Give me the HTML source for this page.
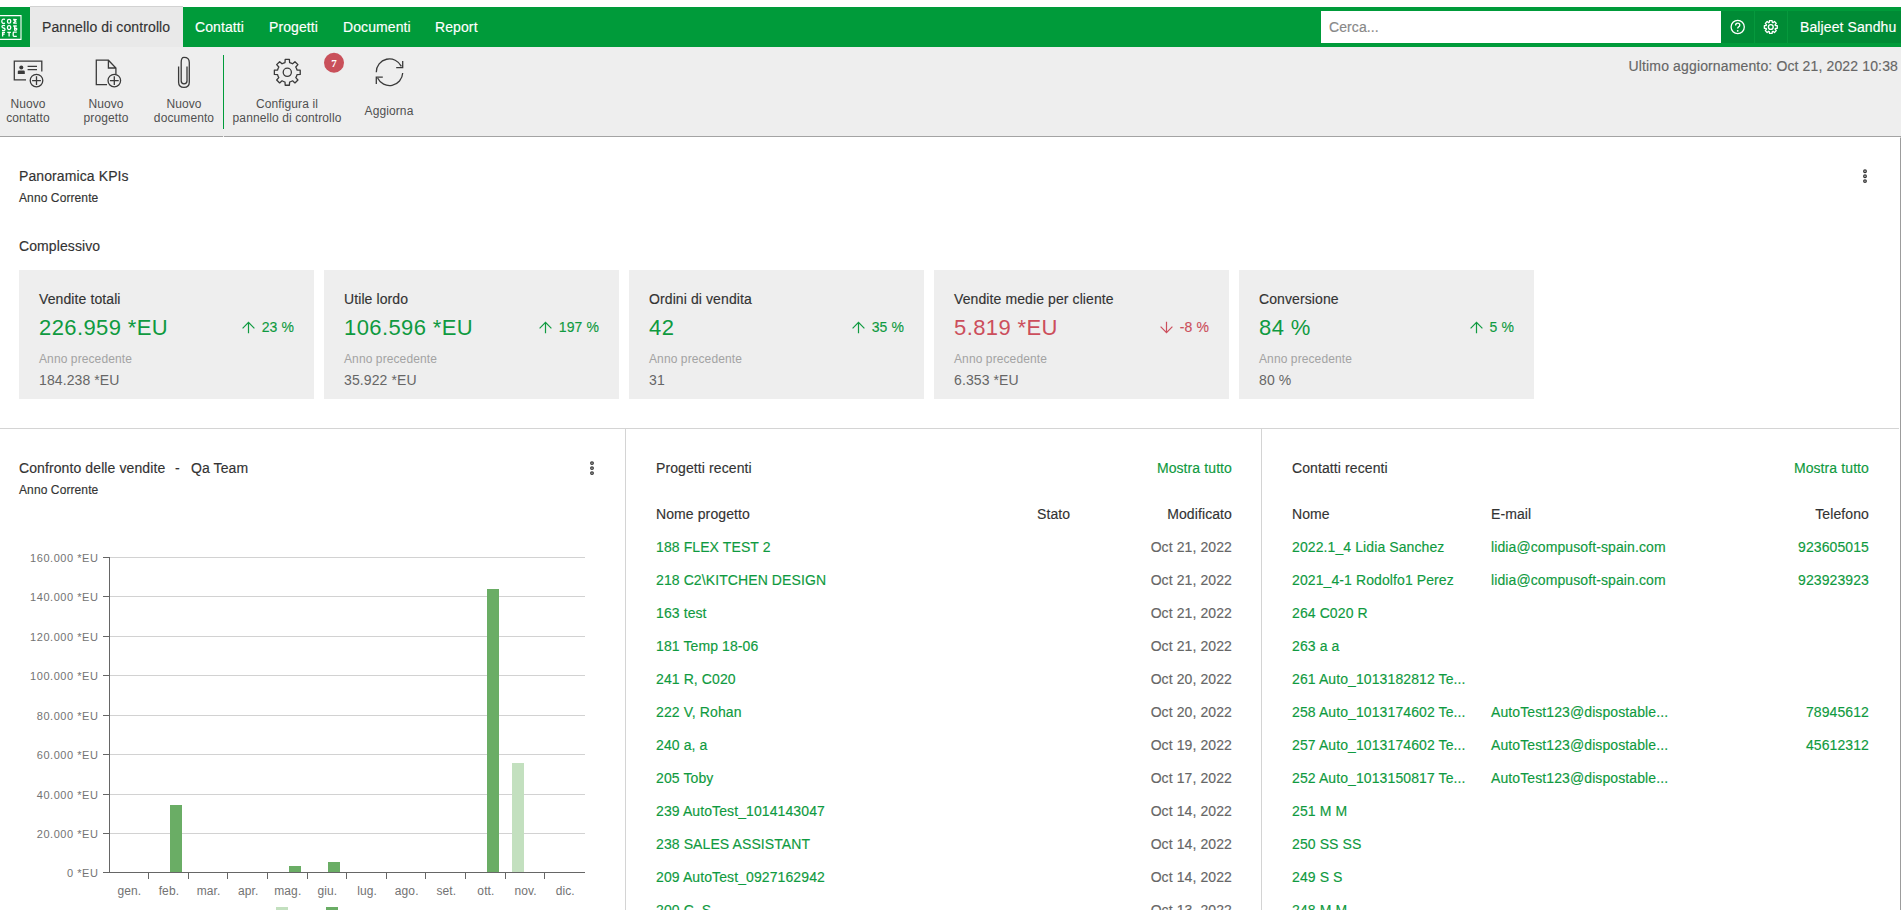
<!DOCTYPE html>
<html><head><meta charset="utf-8">
<style>
*{box-sizing:border-box;margin:0;padding:0}
html,body{width:1901px;height:910px;overflow:hidden;background:#fff}
body{font-family:"Liberation Sans",sans-serif;color:#333;position:relative;letter-spacing:0.1px;-webkit-text-stroke:0.15px currentColor}
.abs{position:absolute;white-space:nowrap}
#nav{position:absolute;left:0;top:7px;width:1901px;height:40px;background:#009b3a}
#logo{position:absolute;left:0;top:0;width:30px;height:40px}
#tab{position:absolute;left:30px;top:-1px;width:153px;height:41px;background:#e9e9e9;border-top:1px solid #d2d2d2}
.nv{position:absolute;top:12px;font-size:14px;color:#fff;line-height:16px}
#tb{position:absolute;left:0;top:47px;width:1901px;height:90px;background:#eeeeee;border-bottom:1px solid #a3a3a3}
.tl{position:absolute;font-size:12px;line-height:14px;color:#505050;-webkit-text-stroke:0;text-align:center;white-space:nowrap}
#main{position:absolute;left:0;top:137px;width:1901px;height:773px;background:#fff;border-right:1px solid #9c9c9c;border-top:1px solid #fff}
.t14{font-size:14px;line-height:16px;color:#333}
.t12{font-size:12px;line-height:14px;color:#333}
.card{position:absolute;top:270px;width:295px;height:129px;background:#eeeeee}
.card .ct{position:absolute;left:20px;top:21px;font-size:14px;line-height:16px;color:#333;white-space:nowrap}
.card .cv{position:absolute;left:20px;top:45px;font-size:22px;line-height:25px;letter-spacing:0.4px;-webkit-text-stroke:0;color:#0f9a40;white-space:nowrap}
.card .cp{position:absolute;right:20px;top:49px;font-size:14px;line-height:16px;color:#0f9a40;white-space:nowrap;display:flex;align-items:center}
.card .ca{position:absolute;left:20px;top:82px;-webkit-text-stroke:0;font-size:12px;line-height:14px;color:#a3a3a3;white-space:nowrap}
.card .cq{position:absolute;left:20px;top:102px;-webkit-text-stroke:0;font-size:14px;line-height:16px;color:#666;white-space:nowrap}
.red{color:#cc4e5c!important}
.g{color:#0f9a40}
.row{position:absolute;font-size:14px;line-height:16px;white-space:nowrap}
</style></head><body>
<div id="nav">
  <div id="logo"><svg style="position:absolute;left:0;top:0" width="30" height="40">
<path d="M0 8.6H21V32.4H0" fill="none" stroke="#fff" stroke-width="1.1"/>
<g fill="none" stroke="#fff" stroke-width="1.3">
<path d="M5 12.4Q3.3 11.9 2.4 12.6Q1.8 13.2 1.8 14.3Q1.8 15.6 2.6 16.1Q3.4 16.5 5 16.1"/>
<rect x="7.5" y="12.3" width="3.2" height="3.9" rx="1.5"/>
<path d="M13.2 12.3L16.8 12.6M13.2 16.2H16.8M13.3 12.6L15.6 14.3L13.3 16"/>
<path d="M5 18.6Q2 18 2 19.5Q2 21 3.5 21Q5 21 5 22.5Q5 24 2 23.5"/>
<rect x="7.5" y="18.6" width="3.2" height="3.9" rx="1.5"/>
<path d="M13.2 19H16.8M14.6 19V23.4M14.6 21Q16.8 21 16.8 22.2Q16.8 23.3 14.6 23.3"/>
<path d="M2.6 25V29.6M2.6 25.4H5M2.6 27.2H4.6"/>
<path d="M7.3 25.4H10.9M9.1 25.4V29.6"/>
<path d="M16.8 25.2H14Q13.2 25.2 13.2 26V28.6Q13.2 29.4 14 29.4H16.8"/>
</g></svg></div>
  <div id="tab"><span class="nv" style="left:12px;top:12px;color:#333">Pannello di controllo</span></div>
  <span class="nv" style="left:195px">Contatti</span>
  <span class="nv" style="left:269px">Progetti</span>
  <span class="nv" style="left:343px">Documenti</span>
  <span class="nv" style="left:435px">Report</span>
  <div style="position:absolute;left:1321px;top:4px;width:400px;height:32px;background:#fff"></div>
  <span class="nv" style="left:1329px;color:#888">Cerca...</span>
  <div style="position:absolute;left:1721px;top:4px;width:180px;height:32px;background:#008b35"></div>
<div style="position:absolute;left:1754px;top:4px;width:1px;height:32px;background:#06993d"></div>
<div style="position:absolute;left:1787px;top:4px;width:1px;height:32px;background:#06993d"></div>
<svg style="position:absolute;left:1721px;top:4px" width="80" height="32">
<circle cx="16.7" cy="16" r="6.6" fill="none" stroke="#fff" stroke-width="1.3"/>
<path d="M14.6 14.4Q14.6 12.2 16.7 12.2Q18.8 12.2 18.8 14.1Q18.8 15.3 17.6 15.9Q16.7 16.4 16.7 17.6" fill="none" stroke="#fff" stroke-width="1.3"/>
<circle cx="16.7" cy="19.8" r="0.9" fill="#fff"/>
<path d="M48.30 11.44L48.50 9.53L51.10 9.53L51.30 11.44A4.8 4.8 0 0 1 51.96 11.72L53.46 10.51L55.29 12.34L54.08 13.84A4.8 4.8 0 0 1 54.36 14.50L56.27 14.70L56.27 17.30L54.36 17.50A4.8 4.8 0 0 1 54.08 18.16L55.29 19.66L53.46 21.49L51.96 20.28A4.8 4.8 0 0 1 51.30 20.56L51.10 22.47L48.50 22.47L48.30 20.56A4.8 4.8 0 0 1 47.64 20.28L46.14 21.49L44.31 19.66L45.52 18.16A4.8 4.8 0 0 1 45.24 17.50L43.33 17.30L43.33 14.70L45.24 14.50A4.8 4.8 0 0 1 45.52 13.84L44.31 12.34L46.14 10.51L47.64 11.72A4.8 4.8 0 0 1 48.30 11.44Z" fill="none" stroke="#fff" stroke-width="1.3" stroke-linejoin="round"/>
<circle cx="49.8" cy="16" r="2.4" fill="none" stroke="#fff" stroke-width="1.4"/>
</svg>
  <span class="nv" style="left:1800px;">Baljeet Sandhu</span>
</div>
<div id="tb">
  <span class="abs t14" style="right:3px;top:11px;color:#666;letter-spacing:0.14px">Ultimo aggiornamento: Oct 21, 2022 10:38</span>
  <div style="position:absolute;left:223px;top:8px;width:1px;height:74px;background:#009b3a"></div><div style="position:absolute;left:223px;top:89px;width:1px;height:1px;background:#eeeeee"></div>
  <span class="tl" style="left:28px;top:50px;transform:translateX(-50%)">Nuovo<br>contatto</span>
  <span class="tl" style="left:106px;top:50px;transform:translateX(-50%)">Nuovo<br>progetto</span>
  <span class="tl" style="left:184px;top:50px;transform:translateX(-50%)">Nuovo<br>documento</span>
  <span class="tl" style="left:287px;top:50px;transform:translateX(-50%)">Configura il<br>pannello di controllo</span>
  <span class="tl" style="left:389px;top:57px;transform:translateX(-50%)">Aggiorna</span>
</div>
<div id="main"></div>
<svg style="position:absolute;left:0;top:0" width="460" height="137" fill="none" stroke="#3a3a3a" stroke-width="1.3">
<path d="M26 79.8H14.3V61.1H41.8V71.6"/>
<circle cx="21.3" cy="67.6" r="2" fill="#3a3a3a" stroke="none"/>
<path d="M17.8 74V71.8Q17.8 70.6 19 70.6H23.6Q24.8 70.6 24.8 71.8V74Z" fill="#3a3a3a" stroke="none"/>
<path d="M27.6 66.4H37M27.6 69.6H37" stroke-width="1.1"/>
<circle cx="36.5" cy="80.6" r="6.3"/>
<path d="M36.5 76.2V85M32.1 80.6H40.9"/>
<path d="M107 84.6H96.3V60.2H108.4L115.9 68V74M108.4 60.2V68H115.9"/>
<circle cx="114.3" cy="80.6" r="6.3"/>
<path d="M114.3 76.2V85M109.9 80.6H118.7"/>
<path d="M187 66.5V81Q187 83.8 184 83.8Q181.2 83.8 181.2 81V62.4Q181.2 57.3 184 57.3Q189.3 57.3 189.3 62.4V82.2Q189.3 87.3 184 87.3Q178.6 87.3 178.6 82.2V66.5"/>
<path d="M285.00 62.57L285.20 59.37L289.40 59.37L289.60 62.57A10.0 10.0 0 0 1 292.56 63.79L294.96 61.67L297.93 64.64L295.81 67.04A10.0 10.0 0 0 1 297.03 70.00L300.23 70.20L300.23 74.40L297.03 74.60A10.0 10.0 0 0 1 295.81 77.56L297.93 79.96L294.96 82.93L292.56 80.81A10.0 10.0 0 0 1 289.60 82.03L289.40 85.23L285.20 85.23L285.00 82.03A10.0 10.0 0 0 1 282.04 80.81L279.64 82.93L276.67 79.96L278.79 77.56A10.0 10.0 0 0 1 277.57 74.60L274.37 74.40L274.37 70.20L277.57 70.00A10.0 10.0 0 0 1 278.79 67.04L276.67 64.64L279.64 61.67L282.04 63.79A10.0 10.0 0 0 1 285.00 62.57Z" stroke-linejoin="round"/>
<circle cx="287.3" cy="72.3" r="4.1"/>
<path d="M376.3 72.2A13.2 13.2 0 0 1 401.4 66.4M402.7 73A13.2 13.2 0 0 1 377.6 78"/>
<path d="M402.7 61.1V67.6H396.2M376.3 83.9V77.2H382.8"/>
<circle cx="334" cy="62.8" r="10" fill="#c9505a" stroke="none"/>
<text x="334" y="66.8" text-anchor="middle" font-family="Liberation Serif" font-weight="bold" font-size="11" fill="#fff" stroke="none">7</text>
</svg>
<!-- KPI -->
<span class="abs t14" style="left:19px;top:168px">Panoramica KPIs</span>
<span class="abs t12" style="left:19px;top:191px">Anno Corrente</span>
<span class="abs t14" style="left:19px;top:238px">Complessivo</span>
<div class="card" style="left:19px"><span class="ct">Vendite totali</span><span class="cv">226.959 *EU</span><span class="cp"><svg width="13" height="13" viewBox="0 0 13 13" style="margin-right:7px"><path d="M6.5 1.3V12.3M0.6 7.3L6.5 1.3L12.4 7.3" fill="none" stroke="currentColor" stroke-width="1.2"/></svg>23 %</span><span class="ca">Anno precedente</span><span class="cq">184.238 *EU</span></div>
<div class="card" style="left:324px"><span class="ct">Utile lordo</span><span class="cv">106.596 *EU</span><span class="cp"><svg width="13" height="13" viewBox="0 0 13 13" style="margin-right:7px"><path d="M6.5 1.3V12.3M0.6 7.3L6.5 1.3L12.4 7.3" fill="none" stroke="currentColor" stroke-width="1.2"/></svg>197 %</span><span class="ca">Anno precedente</span><span class="cq">35.922 *EU</span></div>
<div class="card" style="left:629px"><span class="ct">Ordini di vendita</span><span class="cv">42</span><span class="cp"><svg width="13" height="13" viewBox="0 0 13 13" style="margin-right:7px"><path d="M6.5 1.3V12.3M0.6 7.3L6.5 1.3L12.4 7.3" fill="none" stroke="currentColor" stroke-width="1.2"/></svg>35 %</span><span class="ca">Anno precedente</span><span class="cq">31</span></div>
<div class="card" style="left:934px"><span class="ct">Vendite medie per cliente</span><span class="cv red">5.819 *EU</span><span class="cp red"><svg width="13" height="13" viewBox="0 0 13 13" style="margin-right:7px"><path d="M6.5 0.7V11.7M0.6 5.7L6.5 11.7L12.4 5.7" fill="none" stroke="currentColor" stroke-width="1.2"/></svg>-8 %</span><span class="ca">Anno precedente</span><span class="cq">6.353 *EU</span></div>
<div class="card" style="left:1239px"><span class="ct">Conversione</span><span class="cv">84 %</span><span class="cp"><svg width="13" height="13" viewBox="0 0 13 13" style="margin-right:7px"><path d="M6.5 1.3V12.3M0.6 7.3L6.5 1.3L12.4 7.3" fill="none" stroke="currentColor" stroke-width="1.2"/></svg>5 %</span><span class="ca">Anno precedente</span><span class="cq">80 %</span></div>
<div style="position:absolute;left:0;top:428px;width:1899px;height:1px;background:#d4d4d4"></div>
<div style="position:absolute;left:625px;top:429px;width:1px;height:481px;background:#d4d4d4"></div>
<div style="position:absolute;left:1261px;top:429px;width:1px;height:481px;background:#d4d4d4"></div>
<span class="abs t14" style="left:19px;top:460px">Confronto delle vendite</span><span class="abs t14" style="left:175px;top:460px">-</span><span class="abs t14" style="left:191px;top:460px">Qa Team</span>
<span class="abs t12" style="left:19px;top:483px">Anno Corrente</span>
<svg style="position:absolute;left:0;top:0" width="626" height="910"><line x1="110" y1="557.5" x2="585" y2="557.5" stroke="#d2d2d2" stroke-width="1"/><line x1="103" y1="557.5" x2="109" y2="557.5" stroke="#666" stroke-width="1"/><text x="98.5" y="562" text-anchor="end" font-family="Liberation Sans" font-size="11" letter-spacing="0.55" fill="#737373">160.000 *EU</text><line x1="110" y1="596.5" x2="585" y2="596.5" stroke="#d2d2d2" stroke-width="1"/><line x1="103" y1="596.5" x2="109" y2="596.5" stroke="#666" stroke-width="1"/><text x="98.5" y="601" text-anchor="end" font-family="Liberation Sans" font-size="11" letter-spacing="0.55" fill="#737373">140.000 *EU</text><line x1="110" y1="636.5" x2="585" y2="636.5" stroke="#d2d2d2" stroke-width="1"/><line x1="103" y1="636.5" x2="109" y2="636.5" stroke="#666" stroke-width="1"/><text x="98.5" y="641" text-anchor="end" font-family="Liberation Sans" font-size="11" letter-spacing="0.55" fill="#737373">120.000 *EU</text><line x1="110" y1="675.5" x2="585" y2="675.5" stroke="#d2d2d2" stroke-width="1"/><line x1="103" y1="675.5" x2="109" y2="675.5" stroke="#666" stroke-width="1"/><text x="98.5" y="680" text-anchor="end" font-family="Liberation Sans" font-size="11" letter-spacing="0.55" fill="#737373">100.000 *EU</text><line x1="110" y1="715.5" x2="585" y2="715.5" stroke="#d2d2d2" stroke-width="1"/><line x1="103" y1="715.5" x2="109" y2="715.5" stroke="#666" stroke-width="1"/><text x="98.5" y="720" text-anchor="end" font-family="Liberation Sans" font-size="11" letter-spacing="0.55" fill="#737373">80.000 *EU</text><line x1="110" y1="754.5" x2="585" y2="754.5" stroke="#d2d2d2" stroke-width="1"/><line x1="103" y1="754.5" x2="109" y2="754.5" stroke="#666" stroke-width="1"/><text x="98.5" y="759" text-anchor="end" font-family="Liberation Sans" font-size="11" letter-spacing="0.55" fill="#737373">60.000 *EU</text><line x1="110" y1="794.5" x2="585" y2="794.5" stroke="#d2d2d2" stroke-width="1"/><line x1="103" y1="794.5" x2="109" y2="794.5" stroke="#666" stroke-width="1"/><text x="98.5" y="799" text-anchor="end" font-family="Liberation Sans" font-size="11" letter-spacing="0.55" fill="#737373">40.000 *EU</text><line x1="110" y1="833.5" x2="585" y2="833.5" stroke="#d2d2d2" stroke-width="1"/><line x1="103" y1="833.5" x2="109" y2="833.5" stroke="#666" stroke-width="1"/><text x="98.5" y="838" text-anchor="end" font-family="Liberation Sans" font-size="11" letter-spacing="0.55" fill="#737373">20.000 *EU</text><line x1="103" y1="872.5" x2="109" y2="872.5" stroke="#666" stroke-width="1"/><text x="98.5" y="877" text-anchor="end" font-family="Liberation Sans" font-size="11" letter-spacing="0.55" fill="#737373">0 *EU</text><line x1="109.5" y1="557" x2="109.5" y2="873" stroke="#666" stroke-width="1"/><line x1="103" y1="872.5" x2="585" y2="872.5" stroke="#666" stroke-width="1"/><text x="129.3" y="895" text-anchor="middle" font-family="Liberation Sans" font-size="12" fill="#737373">gen.</text><line x1="148.5" y1="872.5" x2="148.5" y2="879" stroke="#666" stroke-width="1"/><text x="168.9" y="895" text-anchor="middle" font-family="Liberation Sans" font-size="12" fill="#737373">feb.</text><line x1="188.5" y1="872.5" x2="188.5" y2="879" stroke="#666" stroke-width="1"/><text x="208.6" y="895" text-anchor="middle" font-family="Liberation Sans" font-size="12" fill="#737373">mar.</text><line x1="227.5" y1="872.5" x2="227.5" y2="879" stroke="#666" stroke-width="1"/><text x="248.2" y="895" text-anchor="middle" font-family="Liberation Sans" font-size="12" fill="#737373">apr.</text><line x1="267.5" y1="872.5" x2="267.5" y2="879" stroke="#666" stroke-width="1"/><text x="287.8" y="895" text-anchor="middle" font-family="Liberation Sans" font-size="12" fill="#737373">mag.</text><line x1="307.5" y1="872.5" x2="307.5" y2="879" stroke="#666" stroke-width="1"/><text x="327.4" y="895" text-anchor="middle" font-family="Liberation Sans" font-size="12" fill="#737373">giu.</text><line x1="346.5" y1="872.5" x2="346.5" y2="879" stroke="#666" stroke-width="1"/><text x="367.1" y="895" text-anchor="middle" font-family="Liberation Sans" font-size="12" fill="#737373">lug.</text><line x1="386.5" y1="872.5" x2="386.5" y2="879" stroke="#666" stroke-width="1"/><text x="406.7" y="895" text-anchor="middle" font-family="Liberation Sans" font-size="12" fill="#737373">ago.</text><line x1="425.5" y1="872.5" x2="425.5" y2="879" stroke="#666" stroke-width="1"/><text x="446.3" y="895" text-anchor="middle" font-family="Liberation Sans" font-size="12" fill="#737373">set.</text><line x1="465.5" y1="872.5" x2="465.5" y2="879" stroke="#666" stroke-width="1"/><text x="485.9" y="895" text-anchor="middle" font-family="Liberation Sans" font-size="12" fill="#737373">ott.</text><line x1="505.5" y1="872.5" x2="505.5" y2="879" stroke="#666" stroke-width="1"/><text x="525.6" y="895" text-anchor="middle" font-family="Liberation Sans" font-size="12" fill="#737373">nov.</text><line x1="544.5" y1="872.5" x2="544.5" y2="879" stroke="#666" stroke-width="1"/><text x="565.2" y="895" text-anchor="middle" font-family="Liberation Sans" font-size="12" fill="#737373">dic.</text><rect x="170" y="805" width="12" height="67" fill="#6aad65"/><rect x="289" y="866" width="12" height="6" fill="#6aad65"/><rect x="328" y="862" width="12" height="10" fill="#6aad65"/><rect x="487" y="589" width="12" height="283" fill="#6aad65"/><rect x="512" y="763" width="12" height="109" fill="#c3e0bf"/><rect x="276" y="907" width="12" height="3" fill="#c3e0bf"/><rect x="326" y="907" width="12" height="3" fill="#6aad65"/></svg>
<span class="abs t14" style="left:656px;top:460px">Progetti recenti</span>
<span class="abs t14 g" style="right:669px;top:460px">Mostra tutto</span>
<span class="abs t14" style="left:656px;top:506px">Nome progetto</span>
<span class="abs t14" style="left:1037px;top:506px">Stato</span>
<span class="abs t14" style="right:669px;top:506px">Modificato</span>
<span class="row g" style="left:656px;top:539px">188 FLEX TEST 2</span><span class="row" style="right:669px;top:539px;color:#666">Oct 21, 2022</span>
<span class="row g" style="left:656px;top:572px">218 C2\KITCHEN DESIGN</span><span class="row" style="right:669px;top:572px;color:#666">Oct 21, 2022</span>
<span class="row g" style="left:656px;top:605px">163 test</span><span class="row" style="right:669px;top:605px;color:#666">Oct 21, 2022</span>
<span class="row g" style="left:656px;top:638px">181 Temp 18-06</span><span class="row" style="right:669px;top:638px;color:#666">Oct 21, 2022</span>
<span class="row g" style="left:656px;top:671px">241 R, C020</span><span class="row" style="right:669px;top:671px;color:#666">Oct 20, 2022</span>
<span class="row g" style="left:656px;top:704px">222 V, Rohan</span><span class="row" style="right:669px;top:704px;color:#666">Oct 20, 2022</span>
<span class="row g" style="left:656px;top:737px">240 a, a</span><span class="row" style="right:669px;top:737px;color:#666">Oct 19, 2022</span>
<span class="row g" style="left:656px;top:770px">205 Toby</span><span class="row" style="right:669px;top:770px;color:#666">Oct 17, 2022</span>
<span class="row g" style="left:656px;top:803px">239 AutoTest_1014143047</span><span class="row" style="right:669px;top:803px;color:#666">Oct 14, 2022</span>
<span class="row g" style="left:656px;top:836px">238 SALES ASSISTANT</span><span class="row" style="right:669px;top:836px;color:#666">Oct 14, 2022</span>
<span class="row g" style="left:656px;top:869px">209 AutoTest_0927162942</span><span class="row" style="right:669px;top:869px;color:#666">Oct 14, 2022</span>
<span class="row g" style="left:656px;top:902px">200 C, S</span><span class="row" style="right:669px;top:902px;color:#666">Oct 13, 2022</span>
<span class="abs t14" style="left:1292px;top:460px">Contatti recenti</span>
<span class="abs t14 g" style="right:32px;top:460px">Mostra tutto</span>
<span class="abs t14" style="left:1292px;top:506px">Nome</span>
<span class="abs t14" style="left:1491px;top:506px">E-mail</span>
<span class="abs t14" style="right:32px;top:506px">Telefono</span>
<span class="row g" style="left:1292px;top:539px">2022.1_4 Lidia Sanchez</span><span class="row g" style="left:1491px;top:539px">lidia@compusoft-spain.com</span><span class="row g" style="right:32px;top:539px">923605015</span>
<span class="row g" style="left:1292px;top:572px">2021_4-1 Rodolfo1 Perez</span><span class="row g" style="left:1491px;top:572px">lidia@compusoft-spain.com</span><span class="row g" style="right:32px;top:572px">923923923</span>
<span class="row g" style="left:1292px;top:605px">264 C020 R</span>
<span class="row g" style="left:1292px;top:638px">263 a a</span>
<span class="row g" style="left:1292px;top:671px">261 Auto_1013182812 Te...</span>
<span class="row g" style="left:1292px;top:704px">258 Auto_1013174602 Te...</span><span class="row g" style="left:1491px;top:704px">AutoTest123@dispostable...</span><span class="row g" style="right:32px;top:704px">78945612</span>
<span class="row g" style="left:1292px;top:737px">257 Auto_1013174602 Te...</span><span class="row g" style="left:1491px;top:737px">AutoTest123@dispostable...</span><span class="row g" style="right:32px;top:737px">45612312</span>
<span class="row g" style="left:1292px;top:770px">252 Auto_1013150817 Te...</span><span class="row g" style="left:1491px;top:770px">AutoTest123@dispostable...</span>
<span class="row g" style="left:1292px;top:803px">251 M M</span>
<span class="row g" style="left:1292px;top:836px">250 SS SS</span>
<span class="row g" style="left:1292px;top:869px">249 S S</span>
<span class="row g" style="left:1292px;top:902px">248 M M</span>
<svg style="position:absolute;left:1860px;top:166px" width="10" height="20"><g fill="none" stroke="#333" stroke-width="1.3"><circle cx="5" cy="5.2" r="1.3"/><circle cx="5" cy="10.2" r="1.3"/><circle cx="5" cy="15.1" r="1.3"/></g></svg>
<svg style="position:absolute;left:587px;top:458px" width="10" height="20"><g fill="none" stroke="#333" stroke-width="1.3"><circle cx="5" cy="5.1" r="1.3"/><circle cx="5" cy="10.1" r="1.3"/><circle cx="5" cy="15.1" r="1.3"/></g></svg>
</body></html>
